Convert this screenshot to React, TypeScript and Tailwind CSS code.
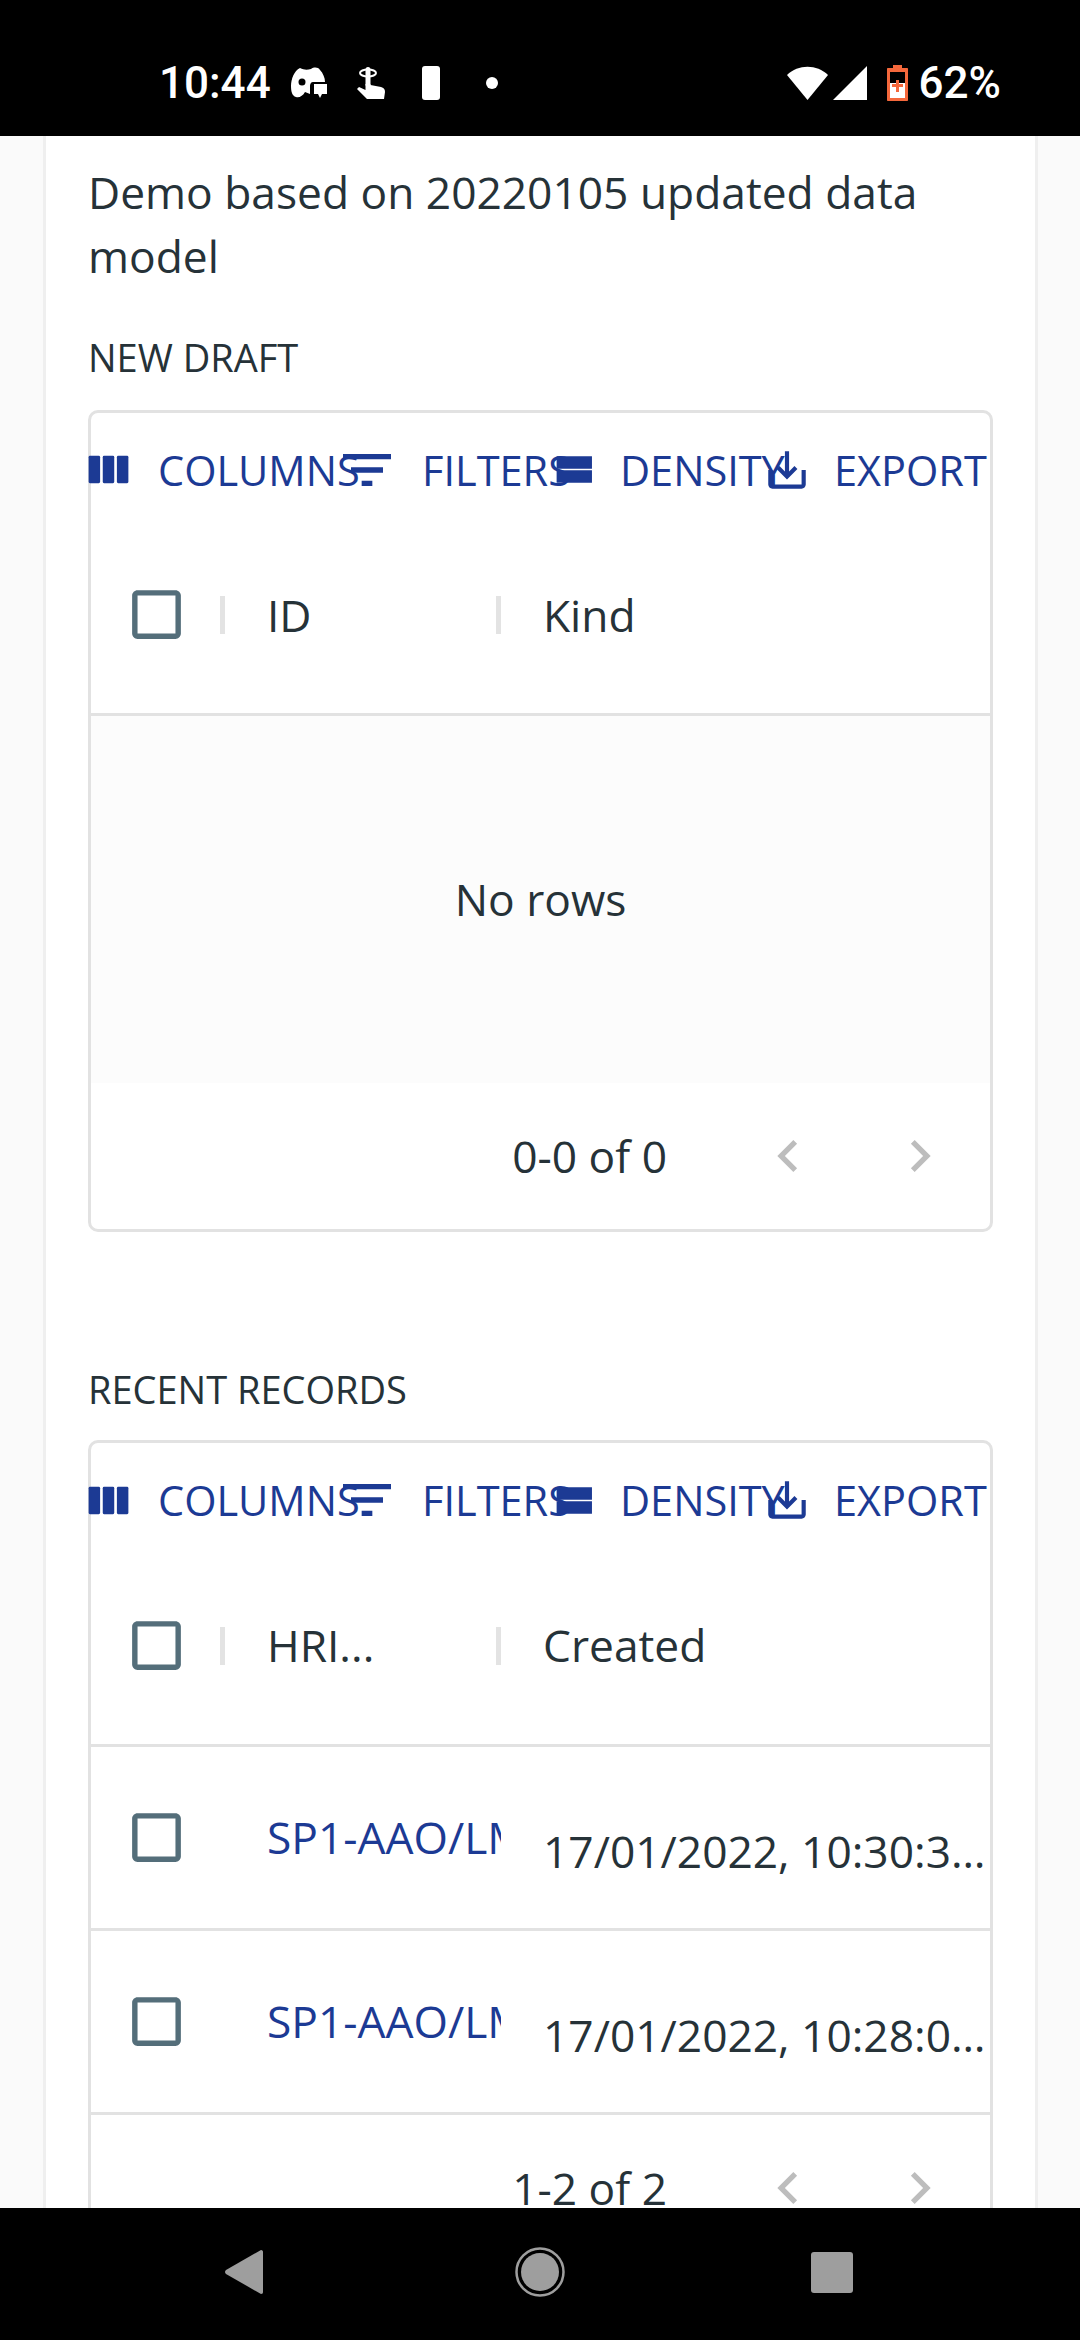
import React from 'react';

const BLUE = '#1c3a94';

const GamepadIcon = () => (
  <svg viewBox="0 0 36 32" className="w-[36px] h-[32px] fill-white">
    <path d="M9 1 C13 3 16 3 20 2 C23 0 27 0 29 3 C32 6 34 11 34 15 L22 15 C20 15 19 17 19 19 L19 27 L14 25 C12 29 8 31 5 30 C1 29 0 24 0 19 C0 12 3 4 9 1 Z" />
    <circle cx="11" cy="15" r="3.5" fill="#000" />
    <path d="M23 17 H36 V27 H31 L29 31 L27 27 H23 Z" />
  </svg>
);

const TouchIcon = () => (
  <svg viewBox="0 0 30 34" className="w-[30px] h-[34px] fill-white">
    <ellipse cx="12" cy="7" rx="8" ry="3.5" fill="none" stroke="#fff" strokeWidth="2" />
    <rect x="9.5" y="1" width="5" height="20" rx="2.5" />
    <path d="M9.5 18 L14.5 18 L14.5 19 L25 21 C28.5 22 29 24 29 26 L28 33 L11 33 L1 23 L3 21 L9.5 24 Z" />
  </svg>
);

const WifiIcon = () => (
  <svg viewBox="0 0 41 34" className="w-[41px] h-[34px] fill-white">
    <path d="M0 9 C11 -2 30 -2 41 9 L20.5 34 Z" />
  </svg>
);

const ViewColumnIcon = () => (
  <svg viewBox="0 0 24 24" className="w-[53px] h-[53px] shrink-0" fill={BLUE}>
    <rect x="3" y="5.8" width="5.2" height="12.4" rx="0.6" />
    <rect x="9.4" y="5.8" width="5.2" height="12.4" rx="0.6" />
    <rect x="15.8" y="5.8" width="5.2" height="12.4" rx="0.6" />
  </svg>
);

const FilterIcon = () => (
  <svg viewBox="0 0 24 24" className="w-[64px] h-[64px] shrink-0" fill={BLUE}>
    <path d="M10 18h4v-2h-4v2zM3 6v2h18V6H3zm3 7h12v-2H6v2z" />
  </svg>
);

const DensityIcon = () => (
  <svg viewBox="0 0 24 24" className="w-[53px] h-[53px] shrink-0" fill={BLUE}>
    <path d="M3 6h16v5.7H3zM3 12.3h16V18H3z" />
  </svg>
);

const ExportIcon = () => (
  <svg viewBox="0 0 24 24" className="w-[50px] h-[50px] shrink-0" fill={BLUE}>
    <path d="M19 12v7H5v-7H3v7c0 1.1.9 2 2 2h14c1.1 0 2-.9 2-2v-7h-2zm-6 .67l2.59-2.58L17 11.5l-5 5-5-5 1.41-1.41L11 12.67V3h2v9.67z" />
  </svg>
);

const CheckBox = () => (
  <svg viewBox="0 0 24 24" className="w-[65px] h-[65px] shrink-0" fill="#546e7a">
    <path d="M19 5v14H5V5h14m0-2H5c-1.1 0-2 .9-2 2v14c0 1.1.9 2 2 2h14c1.1 0 2-.9 2-2V5c0-1.1-.9-2-2-2z" />
  </svg>
);

const Separator = () => <div className="w-[5px] h-[38px] bg-[#e3e3e3] shrink-0" />;

const ToolButton: React.FC<{ icon: React.ReactNode; label: string; className: string }> = ({ icon, label, className }) => (
  <div className={`flex items-center shrink-0 whitespace-nowrap ${className}`}>
    {icon}
    <span>{label}</span>
  </div>
);

const Toolbar = () => (
  <div className="flex items-center h-[114px] ml-[-9px] text-[41.5px] text-[#1c3a94]">
    <ToolButton icon={<ViewColumnIcon />} label="COLUMNS" className="w-[253px] gap-[23px]" />
    <ToolButton icon={<FilterIcon />} label="FILTERS" className="w-[215px] gap-[23px]" />
    <ToolButton icon={<DensityIcon />} label="DENSITY" className="w-[212px] gap-[17px]" />
    <ToolButton icon={<ExportIcon />} label="EXPORT" className="w-[216px] gap-[22px]" />
  </div>
);

const HeaderRow: React.FC<{ first: string; second: string }> = ({ first, second }) => (
  <div className="grid grid-cols-[134px_276px_1fr] items-center h-[190px] pb-[10px] border-b-[3px] border-[#e2e2e2] text-[44.3px]">
    <div className="flex items-center justify-between pl-[33px]">
      <CheckBox />
      <Separator />
    </div>
    <div className="flex items-center justify-between pl-[42px]">
      <span>{first}</span>
      <Separator />
    </div>
    <div className="pl-[42px]">{second}</div>
  </div>
);

const Pager: React.FC<{ text: string }> = ({ text }) => (
  <div className="flex items-center justify-end h-[146px] shrink-0 pr-[4px] text-[44.3px]">
    <span className="mr-[55px]">{text}</span>
    {[0, 1].map((i) => (
      <div key={i} className="w-[132px] flex justify-center">
        <svg viewBox="0 0 24 24" className="w-[64px] h-[64px]" fill="#bdbdbd">
          <path d={i === 0 ? 'M15.41 7.41 14 6l-6 6 6 6 1.41-1.41L10.83 12z' : 'M10 6 8.59 7.41 13.17 12l-4.58 4.59L10 18l6-6z'} />
        </svg>
      </div>
    ))}
  </div>
);

const DataRow: React.FC<{ id: string; date: string }> = ({ id, date }) => (
  <div className="grid grid-cols-[134px_276px_1fr] items-center h-[184px] border-b-[3px] border-[#e2e2e2] text-[44.3px]">
    <div className="pl-[33px] flex">
      <CheckBox />
    </div>
    <div className="pl-[42px] pr-[6px] overflow-hidden whitespace-nowrap text-[#1c3a94]">{id}</div>
    <div className="pl-[42px] pr-[4px] pt-[28px] truncate">{date}</div>
  </div>
);

const Label: React.FC<{ text: string }> = ({ text }) => (
  <div className="text-[38px] leading-[55px]">{text}</div>
);

export default function App() {
  return (
    <div className="w-[1080px] h-[2340px] flex flex-col overflow-hidden bg-[#fafafa] text-[#263238] font-['Open_Sans',sans-serif]">
      {/* Status bar */}
      <div className="h-[136px] shrink-0 bg-black flex items-center justify-between pl-[159px] pr-[79px] pt-[30px] text-white font-['Roboto',sans-serif] text-[44px] font-medium">
        <div className="flex items-center">
          <span className="w-[132px]">10:44</span>
          <GamepadIcon />
          <div className="ml-[29px]">
            <TouchIcon />
          </div>
          <div className="ml-[36px] w-[18px] h-[34px] bg-white rounded-[3px]" />
          <div className="ml-[46px] w-[12px] h-[12px] bg-white rounded-full" />
        </div>
        <div className="flex items-center">
          <WifiIcon />
          <svg viewBox="0 0 34 34" className="w-[34px] h-[34px] fill-white ml-[5px]">
            <path d="M34 0 V34 H0 Z" />
          </svg>
          <svg viewBox="0 0 21 36" className="w-[21px] h-[36px] ml-[20px]">
            <path d="M6 0 H15 V3 H20 C20.6 3 21 3.4 21 4 V35 C21 35.6 20.6 36 20 36 H1 C0.4 36 0 35.6 0 35 V4 C0 3.4 0.4 3 1 3 H6 Z" fill="#f4683c" />
            <rect x="3" y="7" width="15" height="11" fill="#000" />
            <rect x="3" y="18" width="15" height="15" fill="#fff" />
            <path d="M9 15 H12 V19 H16 V22 H12 V27 H9 V22 H5 V19 H9 Z" fill="#f4683c" />
          </svg>
          <span className="ml-[11px]">62%</span>
        </div>
      </div>

      {/* Page */}
      <div className="flex-1 min-h-0 overflow-hidden ml-[43px] mr-[42px] bg-white border-x-[3px] border-[#efefef] px-[42px] pt-[24px]">
        <p className="text-[44.3px] leading-[64px] mb-[42px]">Demo based on 20220105 updated data model</p>

        <Label text="NEW DRAFT" />
        <div className="mt-[25px] border-[3px] border-[#e2e2e2] rounded-[10px] flex flex-col h-[822px]">
          <Toolbar />
          <HeaderRow first="ID" second="Kind" />
          <div className="h-[367px] shrink-0 bg-[#fcfcfc] flex items-center justify-center text-[44.3px]">No rows</div>
          <Pager text="0-0 of 0" />
        </div>

        <div className="mt-[130px]">
          <Label text="RECENT RECORDS" />
        </div>
        <div className="mt-[23px] border-[3px] border-[#e2e2e2] rounded-[10px] flex flex-col">
          <Toolbar />
          <HeaderRow first="HRI..." second="Created" />
          <DataRow id="SP1-AAO/LMN-2022" date="17/01/2022, 10:30:35 AM" />
          <DataRow id="SP1-AAO/LMN-2022" date="17/01/2022, 10:28:04 AM" />
          <Pager text="1-2 of 2" />
        </div>
      </div>

      {/* Nav bar */}
      <div className="h-[132px] shrink-0 bg-black flex items-center pl-[225px] pb-[4px]">
        <svg viewBox="0 0 38 44" className="w-[38px] h-[44px]" fill="#9e9e9e">
          <path d="M36 0 C37.5 0 38 1 38 2 V42 C38 43 37.5 44 36 44 L1 24 C-0.3 23 -0.3 21 1 20 Z" />
        </svg>
        <svg viewBox="0 0 50 50" className="w-[50px] h-[50px] ml-[252px]">
          <circle cx="25" cy="25" r="23.5" fill="none" stroke="#9e9e9e" strokeWidth="2.5" />
          <circle cx="25" cy="25" r="19" fill="#9e9e9e" />
        </svg>
        <div className="w-[42px] h-[41px] ml-[246px] bg-[#9e9e9e] rounded-[3px]" />
      </div>
    </div>
  );
}
